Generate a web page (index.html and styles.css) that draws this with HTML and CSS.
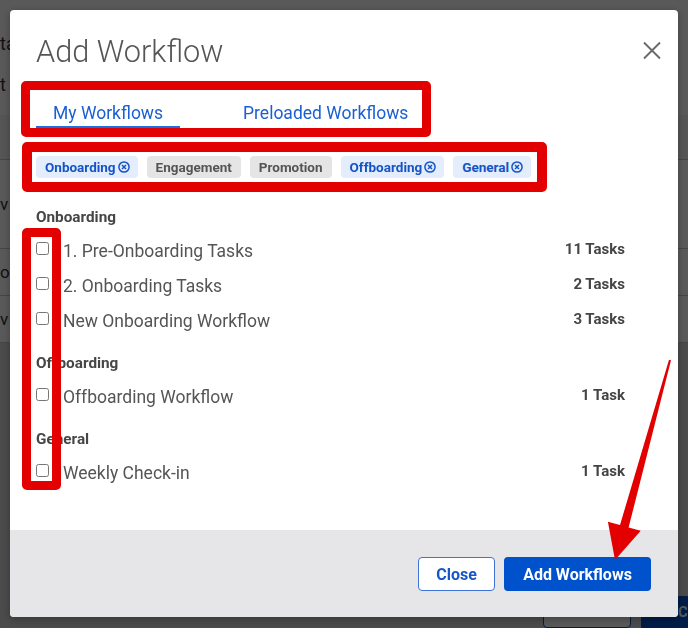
FILE: index.html
```html
<!DOCTYPE html>
<html lang="en">
  <head>
    <meta charset="UTF-8" />
    <meta name="viewport" content="width=device-width, initial-scale=1.0" />
    <title>Add Workflow</title>
    <link rel="stylesheet" href="styles.css">
  </head>
  <body>
    <!-- halaman di belakang modal -->
    <div class="page">
      <div class="page-head">
        <p class="page-title">ta</p>
        <p class="page-sub">t</p>
      </div>
      <div class="page-table">
        <div class="page-row page-row-head"></div>
        <div class="page-row tall">v</div>
        <div class="page-row">ow</div>
        <div class="page-row">v |</div>
      </div>
      <div class="page-rest"></div>
      <div class="page-foot">
        <button class="page-btn"></button>
        <button class="page-btn primary">C</button>
      </div>
    </div>

    <div class="overlay">
      <div class="modal">
        <div class="modal-header">
          <h1>Add Workflow</h1>
          <button class="btn-x" aria-label="Close">
            <svg width="18" height="17" viewBox="0 0 18 17">
              <path d="M1 0.5 L17 16.5 M17 0.5 L1 16.5" stroke="#6b6b6b" stroke-width="2" fill="none" />
            </svg>
          </button>
        </div>

        <div class="modal-body">
          <div class="tabs">
            <a class="tab active">My Workflows</a>
            <a class="tab">Preloaded Workflows</a>
          </div>

          <div class="chips">
            <span class="chip on">Onboarding <svg class="chip-x" viewBox="0 0 12 12"><circle cx="6" cy="6" r="5.1" /><path d="M4 4 L8 8 M8 4 L4 8" /></svg></span>
            <span class="chip">Engagement</span>
            <span class="chip">Promotion</span>
            <span class="chip on">Offboarding <svg class="chip-x" viewBox="0 0 12 12"><circle cx="6" cy="6" r="5.1" /><path d="M4 4 L8 8 M8 4 L4 8" /></svg></span>
            <span class="chip on">General <svg class="chip-x" viewBox="0 0 12 12"><circle cx="6" cy="6" r="5.1" /><path d="M4 4 L8 8 M8 4 L4 8" /></svg></span>
          </div>

          <div class="section">
            <h2>Onboarding</h2>
            <label class="row">
              <input type="checkbox" />
              <span class="row-name">1. Pre-Onboarding Tasks</span>
              <span class="row-count">11 Tasks</span>
            </label>
            <label class="row">
              <input type="checkbox" />
              <span class="row-name">2. Onboarding Tasks</span>
              <span class="row-count">2 Tasks</span>
            </label>
            <label class="row">
              <input type="checkbox" />
              <span class="row-name">New Onboarding Workflow</span>
              <span class="row-count">3 Tasks</span>
            </label>
          </div>

          <div class="section">
            <h2>Offboarding</h2>
            <label class="row">
              <input type="checkbox" />
              <span class="row-name">Offboarding Workflow</span>
              <span class="row-count">1 Task</span>
            </label>
          </div>

          <div class="section">
            <h2>General</h2>
            <label class="row">
              <input type="checkbox" />
              <span class="row-name">Weekly Check-in</span>
              <span class="row-count">1 Task</span>
            </label>
          </div>
        </div>

        <div class="modal-footer">
          <button class="btn btn-close">Close</button>
          <button class="btn btn-add">Add Workflows</button>
        </div>

        <!-- tanda merah di atas screenshot -->
        <div class="mark mark-tabs"></div>
        <div class="mark mark-chips"></div>
        <div class="mark mark-checks"></div>
        <svg class="mark-arrow" width="80" height="220" viewBox="0 0 80 220">
          <polygon points="69,9.7 71,10.3 28.6,177.5 40.7,180.8 15,210 7.9,171.8 20,175.1" fill="#e30000" />
        </svg>
      </div>
    </div>
  </body>
</html>
```

FILE: styles.css
```css
html,
body {
  margin: 0;
  padding: 0;
}
body {
  font-family: Roboto, "Liberation Sans", Arial, sans-serif;
  background: #d2d2d2;
  width: 688px;
  height: 628px;
  overflow: hidden;
}

/* halaman belakang */
.page {
  background: #fff;
  height: 628px;
  display: flex;
  flex-direction: column;
}
.page-head {
  height: 115px;
  padding-top: 33px;
  box-sizing: border-box;
}
.page-head p {
  margin: 0;
  font-size: 18px;
  color: #333;
}
.page-sub {
  margin-top: 20px !important;
}
.page-row {
  height: 46px;
  border-bottom: 1px solid #c8c8c8;
  font-size: 17px;
  color: #333;
  display: flex;
  align-items: center;
}
.page-row.tall {
  height: 88px;
}
.page-row-head {
  background: #f4f4f4;
  height: 44px;
}
.page-rest {
  flex: 1;
  background: #d6d6d6;
}
.page-foot {
  background: #d6d6d6;
  display: flex;
  justify-content: flex-end;
  gap: 10px;
  height: 32px;
  align-items: flex-end;
}
.page-btn {
  width: 88px;
  height: 32px;
  border: 1px solid #0052cc;
  background: #fff;
  border-radius: 4px;
  font-size: 15px;
  font-weight: bold;
  color: #0052cc;
  font-family: inherit;
}
.page-btn.primary {
  width: 47px;
  background: #0052cc;
  color: #fff;
  text-align: left;
  padding: 0 0 0 36px;
  overflow: hidden;
  border-radius: 4px 0 0 0;
}

/* modal */
.overlay {
  position: fixed;
  inset: 0;
  background: rgba(0, 0, 0, 0.65);
  padding: 10px;
}
.modal {
  position: relative;
  width: 668px;
  height: 607px;
  background: #fff;
  border-radius: 4px;
  display: flex;
  flex-direction: column;
  box-shadow: 0 2px 8px rgba(0, 0, 0, 0.3);
}
.modal-header {
  display: flex;
  justify-content: space-between;
  align-items: flex-start;
  padding: 24px 17px 0 26px;
}
.modal-header h1 {
  margin: 0;
  font-size: 30.7px;
  line-height: 36px;
  font-weight: 300;
  color: #555;
}
.btn-x {
  background: none;
  border: none;
  padding: 0;
  margin-top: 8px;
  display: block;
  cursor: pointer;
}
.btn-x svg {
  display: block;
}
.modal-body {
  flex: 1;
  padding: 0 53px 0 26px;
}

.tabs {
  display: flex;
  margin-top: 18px;
}
.tab {
  font-size: 17.5px;
  line-height: 22px;
  padding: 14px 17px 2px;
  color: #1b5fd3;
  border-bottom: 2px solid transparent;
  cursor: pointer;
}
.tab + .tab {
  margin-left: 46px;
}
.tab.active {
  border-bottom-color: #1c6fe3;
}

.chips {
  display: flex;
  gap: 9px;
  margin-top: 28px;
}
.chip {
  display: inline-flex;
  align-items: center;
  gap: 2px;
  height: 22px;
  padding: 0 9px;
  border-radius: 4px;
  background: #e5e5e5;
  color: #555;
  font-size: 13.5px;
  font-weight: bold;
}
.chip.on {
  background: #e4edfb;
  color: #1554c6;
  padding-right: 8px;
}
.chip-x {
  width: 12px;
  height: 12px;
  fill: none;
  stroke: #1554c6;
  stroke-width: 1.5;
}

.section {
  margin-top: 14px;
}
.chips + .section {
  margin-top: 29px;
}
.section h2 {
  margin: 0;
  font-size: 15.3px;
  line-height: 20px;
  padding-bottom: 7px;
  font-weight: bold;
  color: #464646;
}
.row {
  display: flex;
  align-items: flex-start;
  height: 35px;
}
.row input {
  margin: 8px 14px 0 0;
  width: 13px;
  height: 13px;
}
.row-name {
  flex: 1;
  font-size: 17.5px;
  line-height: 35px;
  color: #555;
}
.row-count {
  font-size: 15px;
  line-height: 30px;
  font-weight: bold;
  color: #454545;
}

.modal-footer {
  height: 87px;
  box-sizing: border-box;
  background: #e6e6e8;
  border-radius: 0 0 4px 4px;
  padding: 27px 27px 0 0;
  display: flex;
  justify-content: flex-end;
  align-items: flex-start;
  gap: 9px;
}
.btn {
  height: 34px;
  border-radius: 4px;
  font-family: inherit;
  font-size: 16px;
  font-weight: bold;
  cursor: pointer;
}
.btn-close {
  width: 77px;
  background: #fff;
  border: 1px solid #3f74d6;
  color: #1756c9;
}
.btn-add {
  width: 147px;
  background: #0052cc;
  border: none;
  color: #fff;
}

/* anotasi */
.mark {
  position: absolute;
  border: 9px solid #e20000;
  border-radius: 5px;
  box-sizing: border-box;
}
.mark-tabs {
  left: 11px;
  top: 71px;
  width: 410px;
  height: 56px;
}
.mark-chips {
  left: 12px;
  top: 132px;
  width: 525px;
  height: 50px;
  border-width: 10px;
}
.mark-checks {
  left: 12px;
  top: 218px;
  width: 39px;
  height: 262px;
}
.mark-arrow {
  position: absolute;
  left: 590px;
  top: 340px;
}
```
